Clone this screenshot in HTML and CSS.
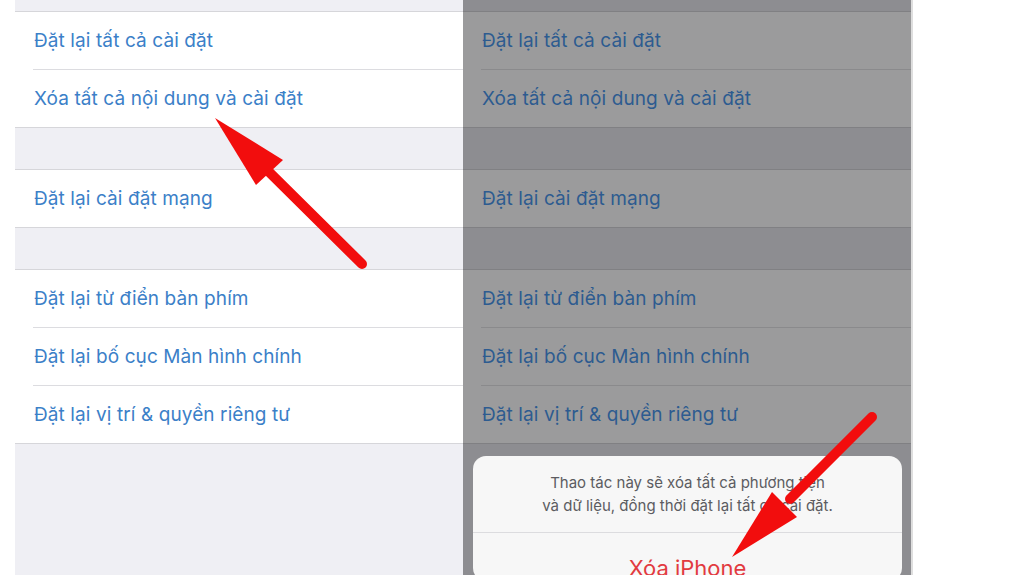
FILE: index.html
```html
<!DOCTYPE html>
<html lang="vi">
<head>
<meta charset="utf-8">
<title>Đặt lại</title>
<link rel="stylesheet" href="styles.css">
</head>
<body>
<div class="page">
  <div class="edge"></div>
  <section class="panel">
    <div class="group">
      <div class="row">Đặt lại tất cả cài đặt</div>
      <div class="row">Xóa tất cả nội dung và cài đặt</div>
    </div>
    <div class="group">
      <div class="row">Đặt lại cài đặt mạng</div>
    </div>
    <div class="group">
      <div class="row">Đặt lại từ điển bàn phím</div>
      <div class="row">Đặt lại bố cục Màn hình chính</div>
      <div class="row">Đặt lại vị trí &amp; quyền riêng tư</div>
    </div>
  </section>
  <section class="panel dim">
    <div class="group">
      <div class="row">Đặt lại tất cả cài đặt</div>
      <div class="row">Xóa tất cả nội dung và cài đặt</div>
    </div>
    <div class="group">
      <div class="row">Đặt lại cài đặt mạng</div>
    </div>
    <div class="group">
      <div class="row">Đặt lại từ điển bàn phím</div>
      <div class="row">Đặt lại bố cục Màn hình chính</div>
      <div class="row">Đặt lại vị trí &amp; quyền riêng tư</div>
    </div>
    <div class="sheet">
      <p class="sheet-msg">Thao tác này sẽ xóa tất cả phương tiện<br>và dữ liệu, đồng thời đặt lại tất cả cài đặt.</p>
      <div class="sheet-btn">Xóa iPhone</div>
    </div>
  </section>
  <div class="rest"></div>
</div>
<svg class="arrows" width="1024" height="575" viewBox="0 0 1024 575" aria-hidden="true">
  <line x1="362" y1="264" x2="262" y2="165" stroke="#f20d0d" stroke-width="10" stroke-linecap="round"/>
  <polygon points="215,118 283,160 256,185" fill="#f20d0d"/>
  <line x1="872" y1="417" x2="790" y2="499" stroke="#f20d0d" stroke-width="10" stroke-linecap="round"/>
  <polygon points="732,557 772,492 797,517" fill="#f20d0d"/>
</svg>
</body>
</html>
```
FILE: styles.css
```css
html, body {
  margin: 0;
  padding: 0;
  background: #ffffff;
  overflow: hidden;
}
body {
  width: 1024px;
  height: 575px;
  position: relative;
  font-family: Inter, "Liberation Sans", "Noto Sans", sans-serif;
}
.page {
  display: flex;
  height: 575px;
}
.edge {
  width: 15px;
  flex: none;
}
.panel {
  width: 448px;
  flex: none;
  background: #efeff4;
  display: flex;
  flex-direction: column;
  gap: 41px;
  padding-top: 11px;
  box-sizing: border-box;
}
.group {
  background: #ffffff;
  border-top: 1px solid #d6d6da;
  border-bottom: 1px solid #d6d6da;
}
.row {
  height: 57px;
  display: flex;
  align-items: center;
  padding-left: 19px;
  font-size: 19px;
  color: #3b80c8;
  letter-spacing: 0.1px;
}
.row + .row {
  margin-left: 18px;
  padding-left: 1px;
  border-top: 1px solid #dcdce0;
}
.dim {
  background: #8d8d91;
  border-right: 2px solid #dedede;
  width: 450px;
}
.dim .group {
  background: #9b9b9c;
  border-color: #808083;
}
.dim .row {
  color: #2d5b90;
}
.dim .row + .row {
  border-top-color: #8a8a8c;
}
.sheet {
  margin: -29px 9px 0 10px;
  background: #f7f7f7;
  border-radius: 13px;
  flex: 1;
  text-align: center;
}
.sheet-msg {
  margin: 0;
  padding: 15px 16px 15px;
  font-size: 15px;
  line-height: 23px;
  color: #5c5c61;
}
.sheet-btn {
  border-top: 1px solid #dcdcdf;
  padding-top: 22px;
  font-size: 22px;
  color: #e23a40;
}
.rest {
  flex: 1;
}
.arrows {
  position: absolute;
  left: 0;
  top: 0;
}
```
